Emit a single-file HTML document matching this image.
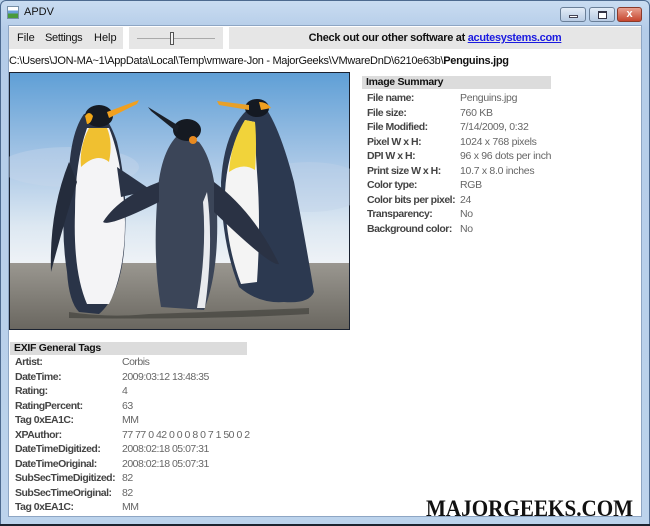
<!DOCTYPE html>
<html><head><meta charset="utf-8"><style>
*{margin:0;padding:0;box-sizing:border-box}
body{width:650px;height:526px;overflow:hidden;font-family:"Liberation Sans",sans-serif;background:#b9d1ea;position:relative}
.frame{position:absolute;left:0;top:0;width:650px;height:526px;background:linear-gradient(#c9dcf1,#b4cce8 30px,#bcd3ec);border:1px solid #4d6a8f;border-radius:6px 6px 0 0}
.title{position:absolute;left:24px;top:6px;font-size:11px;color:#111}
.ico{position:absolute;left:7px;top:6px;width:12px;height:13px;background:linear-gradient(#fff 0 30%,#6a9fd8 30% 60%,#4a9a3a 60%);border:1px solid #7890a8}
.btn{position:absolute;top:7px;height:15px;border:1px solid #6a7f98;border-radius:3px;background:linear-gradient(#e3ecf7,#b8cbe3)}
.client{position:absolute;left:8px;top:25px;width:634px;height:492px;background:#fff;border:1px solid #8ea6c4}
.tb{position:absolute;top:1px;height:22px;background:#e6e6e6;font-size:11px;color:#111}
.lab{position:absolute;font-size:10.5px;line-height:14.5px}
.lab div{height:14.5px;white-space:nowrap}
.k{color:#444;font-weight:bold;letter-spacing:-0.5px}
.v{color:#666;letter-spacing:-0.3px}
.hdr{position:absolute;background:#dcdcdc;font-size:10.5px;font-weight:bold;color:#111;height:13px;line-height:13px;padding-left:4px;letter-spacing:-0.3px}
</style></head><body>
<div class="frame"></div>
<div class="ico"></div>
<div class="title">APDV</div>
<div class="btn" style="left:560px;width:26px"><div style="position:absolute;left:8px;top:7px;width:9px;height:3px;background:#fff;border:1px solid #445"></div></div>
<div class="btn" style="left:589px;width:26px"><div style="position:absolute;left:8px;top:3px;width:9px;height:8px;border:1px solid #334;border-top-width:2px;background:#fff"></div></div>
<div class="btn" style="left:617px;width:25px;background:linear-gradient(#e8a090,#c6452e);border-color:#8a3a2a"><div style="position:absolute;left:0;width:23px;top:0;text-align:center;color:#fff;font-weight:bold;font-size:11px;line-height:13px">x</div></div>
<div class="client">
 <div class="tb" style="left:0;width:114px"><span style="position:absolute;left:8px;top:5px">File</span><span style="position:absolute;left:36px;top:5px;letter-spacing:-0.3px">Settings</span><span style="position:absolute;left:85px;top:5px">Help</span></div>
 <div class="tb" style="left:120px;width:94px"><div style="position:absolute;left:8px;top:11px;width:78px;height:1px;background:#aaa"></div><div style="position:absolute;left:41px;top:5px;width:4px;height:13px;border:1px solid #555;background:#f4f4f4"></div></div>
 <div class="tb" style="left:220px;width:412px;font-weight:bold;text-align:center;line-height:22px;letter-spacing:-0.3px">Check out our other software at <span style="color:#1a1ae0;text-decoration:underline">acutesystems.com</span></div>
 <div style="position:absolute;left:0;top:29px;font-size:11px;color:#111;letter-spacing:-0.3px">C:\Users\JON-MA~1\AppData\Local\Temp\vmware-Jon - MajorGeeks\VMwareDnD\6210e63b\<b>Penguins.jpg</b></div>
 <svg style="position:absolute;left:0;top:46px" width="341" height="258" viewBox="0 0 341 258">
  <defs><linearGradient id="sky" x1="0" y1="0" x2="0" y2="1"><stop offset="0" stop-color="#5f9fd6"/><stop offset="0.35" stop-color="#a9c7e6"/><stop offset="0.6" stop-color="#dde8f2"/><stop offset="0.74" stop-color="#eef2f6"/></linearGradient>
  <linearGradient id="sand" x1="0" y1="0" x2="0" y2="1"><stop offset="0" stop-color="#9a9790"/><stop offset="1" stop-color="#6a6760"/></linearGradient></defs>
  <rect x="0" y="0" width="341" height="258" fill="#1a2230"/>
  <rect x="1" y="1" width="339" height="256" fill="url(#sky)"/>
  <ellipse cx="60" cy="95" rx="70" ry="20" fill="#c8d8ea" opacity=".4"/>
  <ellipse cx="300" cy="115" rx="60" ry="25" fill="#c0d3e8" opacity=".4"/>
  <rect x="1" y="191" width="339" height="66" fill="url(#sand)"/>
  <path d="M75 42 Q62 60 60 100 Q50 150 58 200 Q60 230 70 240 L90 242 Q110 225 115 180 Q120 120 108 70 Q100 45 88 40Z" fill="#2a3448"/>
  <path d="M78 56 Q66 90 66 140 Q64 200 78 232 L100 232 Q116 200 116 150 Q114 90 100 56Z" fill="#f4f4f6"/>
  <path d="M80 56 Q70 75 72 95 Q88 80 100 90 Q104 70 98 56Z" fill="#f0c030"/>
  <path d="M60 90 Q40 140 42 200 Q55 150 68 110Z" fill="#242c3c"/>
  <path d="M108 95 Q130 110 142 118 L112 125Z" fill="#2a3346"/>
  <ellipse cx="90" cy="44" rx="14" ry="11" fill="#151a22"/>
  <path d="M98 40 L130 28 L128 32 L100 46Z" fill="#f0a020"/>
  <path d="M76 44 Q80 38 84 44 Q82 52 78 52Z" fill="#f2a818"/>
  <path d="M238 38 Q215 60 212 110 Q212 170 230 215 Q250 232 275 230 Q300 232 305 220 Q295 160 285 110 Q272 60 258 38Z" fill="#2c3950"/>
  <path d="M236 48 Q218 80 216 120 Q216 170 232 212 L248 210 Q252 150 248 100 Q246 70 246 50Z" fill="#f4f4f4"/>
  <path d="M236 48 Q222 70 220 100 Q234 90 246 98 Q248 70 246 50Z" fill="#f1d33a"/>
  <ellipse cx="248" cy="36" rx="12" ry="9" fill="#141922"/>
  <path d="M250 30 Q258 30 262 36 L252 38Z" fill="#f0a020"/>
  <path d="M240 33 L208 29 L210 33 L240 38Z" fill="#e8a028"/>
  <path d="M170 62 Q150 80 148 130 Q144 190 152 235 L195 238 Q210 200 208 140 Q206 90 190 70Z" fill="#3b4558"/>
  <path d="M150 110 Q110 125 94 150 Q100 155 150 130Z" fill="#2a3244"/>
  <path d="M205 110 Q245 140 270 192 Q262 195 205 140Z" fill="#2a3244"/>
  <path d="M198 120 Q205 170 196 236 L188 236 Q198 180 194 130Z" fill="#e8eaee"/>
  <ellipse cx="178" cy="58" rx="14" ry="11" fill="#151a22"/>
  <path d="M170 54 L139 35 L142 39 L168 60Z" fill="#1a1f28"/>
  <circle cx="184" cy="68" r="4" fill="#e88a20"/>
  <path d="M60 240 Q100 246 140 242 Q200 240 300 236 L300 242 Q200 248 60 246Z" fill="#3a3a36" opacity=".6"/>
 </svg>
 <div class="hdr" style="left:353px;top:50px;width:189px">Image Summary</div>
 <div class="lab" style="left:358px;top:50.5px;width:200px">
  <div>&nbsp;</div><div class="k">File name:</div><div class="k">File size:</div><div class="k">File Modified:</div><div class="k">Pixel W x H:</div><div class="k">DPI W x H:</div><div class="k">Print size W x H:</div><div class="k">Color type:</div><div class="k">Color bits per pixel:</div><div class="k">Transparency:</div><div class="k">Background color:</div>
 </div>
 <div class="lab v" style="left:451px;top:50.5px">
  <div>&nbsp;</div><div>Penguins.jpg</div><div>760 KB</div><div>7/14/2009, 0:32</div><div>1024 x 768 pixels</div><div>96 x 96 dots per inch</div><div>10.7 x 8.0 inches</div><div>RGB</div><div>24</div><div>No</div><div>No</div>
 </div>
 <div class="hdr" style="left:1px;top:316px;width:237px">EXIF General Tags</div>
 <div class="lab" style="left:6px;top:329px">
  <div class="k">Artist:</div><div class="k">DateTime:</div><div class="k">Rating:</div><div class="k">RatingPercent:</div><div class="k">Tag 0xEA1C:</div><div class="k">XPAuthor:</div><div class="k">DateTimeDigitized:</div><div class="k">DateTimeOriginal:</div><div class="k">SubSecTimeDigitized:</div><div class="k">SubSecTimeOriginal:</div><div class="k">Tag 0xEA1C:</div>
 </div>
 <div class="lab v" style="left:113px;top:329px;letter-spacing:-0.5px">
  <div>Corbis</div><div>2009:03:12 13:48:35</div><div>4</div><div>63</div><div>MM</div><div>77 77 0 42 0 0 0 8 0 7 1 50 0 2</div><div>2008:02:18 05:07:31</div><div>2008:02:18 05:07:31</div><div>82</div><div>82</div><div>MM</div>
 </div>
 <div style="position:absolute;left:417px;top:471px;font-family:'Liberation Serif',serif;font-weight:bold;font-size:22px;line-height:22px;color:#111;transform:scale(0.96,1.05);transform-origin:left top;white-space:nowrap">MAJORGEEKS.COM</div>
</div>
<div style="position:absolute;left:0;top:524px;width:650px;height:2px;background:#1c2430"></div>
</body></html>
